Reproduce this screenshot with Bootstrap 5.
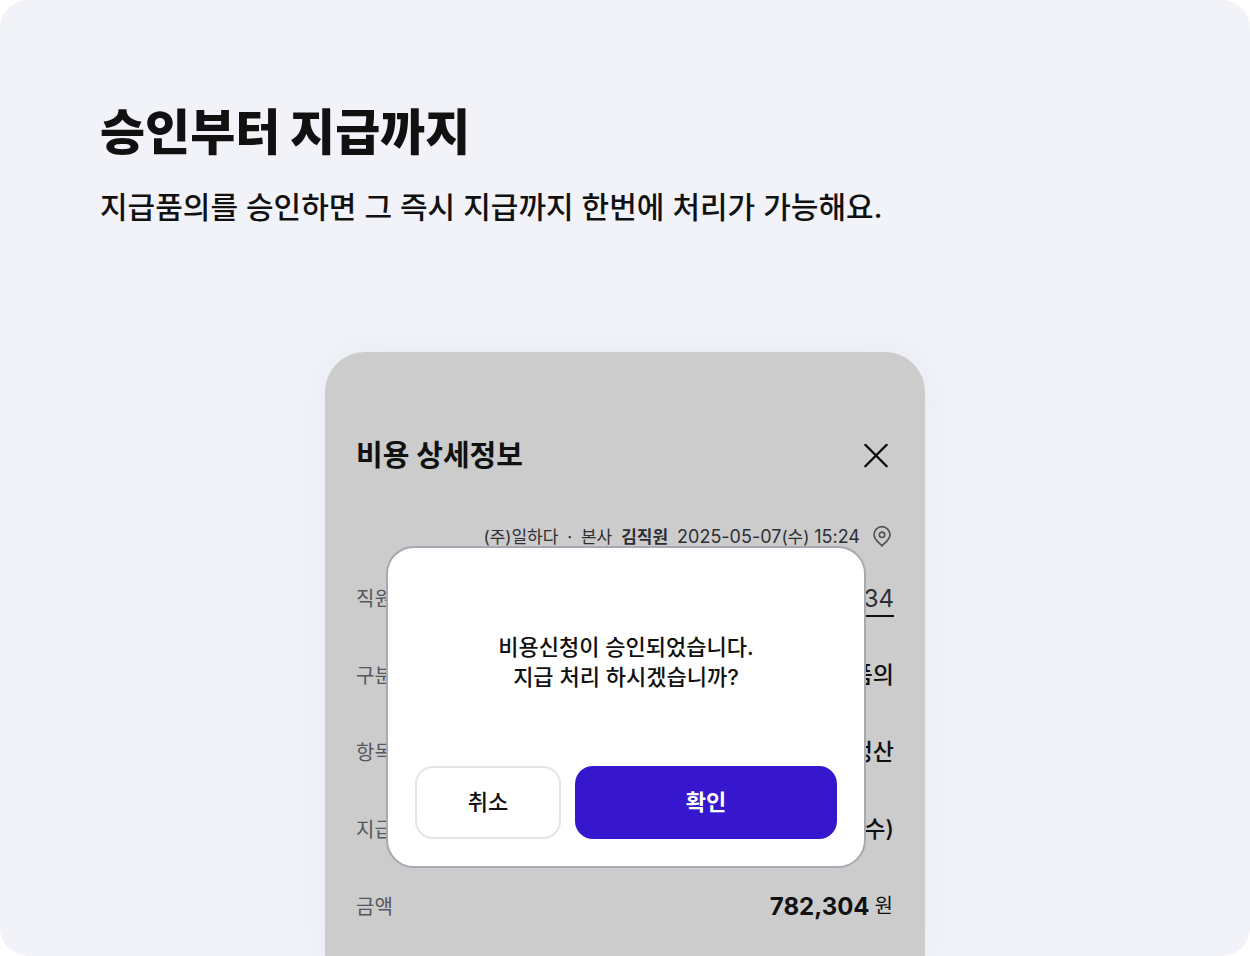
<!DOCTYPE html>
<html lang="ko">
<head>
<meta charset="utf-8">
<meta name="viewport" content="width=device-width, initial-scale=1">
<title>승인부터 지급까지</title>
<link href="https://cdn.jsdelivr.net/npm/bootstrap@5.3.0/dist/css/bootstrap.min.css" rel="stylesheet">
<style>
  body { font-family: Inter, "Noto Sans CJK KR", sans-serif; background: #fff; color: #111; }
  .promo { background: #f1f3f9; border-radius: 28px; padding: 97px 100px 0; }
  .promo-title { font-size: 49px; line-height: 72px; font-weight: 900; }
  .promo-desc { font-size: 30px; line-height: 44px; font-weight: 500; margin-top: 16px; margin-bottom: 123px; }
  .sheet { max-width: 600px; padding: 84px 31px 0; border-radius: 40px 40px 0 0; background: #ccc; box-shadow: 0 0 36px rgba(60, 60, 80, .05); }
  .sheet-title { font-size: 29px; line-height: 40px; }
  .icon-button { padding: 0 6px; border: 0; background: none; }
  .icon-button svg { display: block; }
  .meta-line { margin-top: 48px; height: 26px; gap: 10px; font-size: 18px; color: #2e2f34; }
  .meta-text { gap: 9px; }
  .meta-ko { font-size: 17px; }
  .detail-list { margin-top: 10px; }
  .detail-row { height: 77px; }
  .detail-row dt { font-size: 20px; font-weight: 400; color: #55575e; }
  .detail-row dd { font-size: 23px; font-weight: 500; }
  .staff-link { color: #2e2f34; font-size: 24px; font-weight: 400; border-bottom: 2px solid #111; padding-bottom: 2px; text-decoration: none; }
  .amount { font-size: 24px; }
  .won { font-size: 20px; line-height: 28px; font-weight: 400; padding: 0 1px 2px 5px; }
  .confirm-box { top: 194px; left: 61px; right: 59px; padding: 84px 27px 27px; border: 2px solid #a6a9b1; border-radius: 28px; background: #fff; }
  .confirm-text { font-size: 22px; line-height: 30px; font-weight: 500; margin-bottom: 74px; }
  .confirm-actions { gap: 14px; }
  .action { height: 73px; border-radius: 18px; font-size: 22px; font-weight: 500; }
  .action-cancel { width: 146px; border: 2px solid #e5e5e6; background: #fff; color: #111; }
  .action-ok { background: #3617ce; color: #fff; font-weight: 600; }
  .action-ok:hover { background: #2c12ad; color: #fff; }
</style>
</head>
<body>
<main class="promo min-vh-100 d-flex flex-column overflow-hidden">
  <h1 class="promo-title mb-0">승인부터 지급까지</h1>
  <p class="promo-desc">지급품의를 승인하면 그 즉시 지급까지 한번에 처리가 가능해요.</p>

  <section class="sheet w-100 mx-auto flex-grow-1 position-relative">
    <header class="d-flex justify-content-between align-items-center">
      <h2 class="sheet-title fw-bold mb-0">비용 상세정보</h2>
      <button type="button" class="icon-button" aria-label="닫기">
        <svg width="24" height="24" viewBox="0 0 24 24" fill="none" stroke="#0b0b0c" stroke-width="2.3" stroke-linecap="round"><path d="M1.300 .8 22.700 22.200M22.700 .8 1.300 22.200"/></svg>
      </button>
    </header>

    <div class="meta-line d-flex justify-content-end align-items-center text-nowrap">
      <div class="meta-text d-flex align-items-baseline">
        <span class="meta-ko">(주)일하다<span class="px-1"> · </span>본사</span>
        <strong class="meta-ko">김직원</strong>
        <time datetime="2025-05-07T15:24">2025-05-07<span class="meta-ko">(수) </span>15:24</time>
      </div>
      <svg width="24" height="24" viewBox="0 0 24 24" fill="none" stroke="#505259" stroke-width="1.700"><path d="M12 20.900C9.700 18.200 4 14.500 4 9.700a8 8 0 0 1 16 0C20 14.500 14.300 18.200 12 20.900Z" stroke-linejoin="round"/><circle cx="12" cy="9.800" r="2.700"/></svg>
    </div>

    <dl class="detail-list mb-0">
      <div class="detail-row d-flex justify-content-between align-items-center"><dt>직원</dt><dd class="mb-0"><a href="#" class="staff-link">34</a></dd></div>
      <div class="detail-row d-flex justify-content-between align-items-center"><dt>구분</dt><dd class="mb-0">품의</dd></div>
      <div class="detail-row d-flex justify-content-between align-items-center"><dt>항목</dt><dd class="mb-0">정산</dd></div>
      <div class="detail-row d-flex justify-content-between align-items-center"><dt>지급</dt><dd class="mb-0">(수)</dd></div>
      <div class="detail-row d-flex justify-content-between align-items-center"><dt>금액</dt><dd class="d-flex align-items-center mb-0"><strong class="amount">782,304</strong><span class="won">원</span></dd></div>
    </dl>

    <div class="confirm-box position-absolute" role="dialog" aria-labelledby="confirm-text">
      <p class="confirm-text text-center" id="confirm-text">비용신청이 승인되었습니다.<br>지급 처리 하시겠습니까?</p>
      <div class="confirm-actions d-flex">
        <button type="button" class="btn action action-cancel">취소</button>
        <button type="button" class="btn action action-ok flex-grow-1">확인</button>
      </div>
    </div>
  </section>
</main>
<script src="https://cdn.jsdelivr.net/npm/bootstrap@5.3.0/dist/js/bootstrap.bundle.min.js"></script>
</body>
</html>
